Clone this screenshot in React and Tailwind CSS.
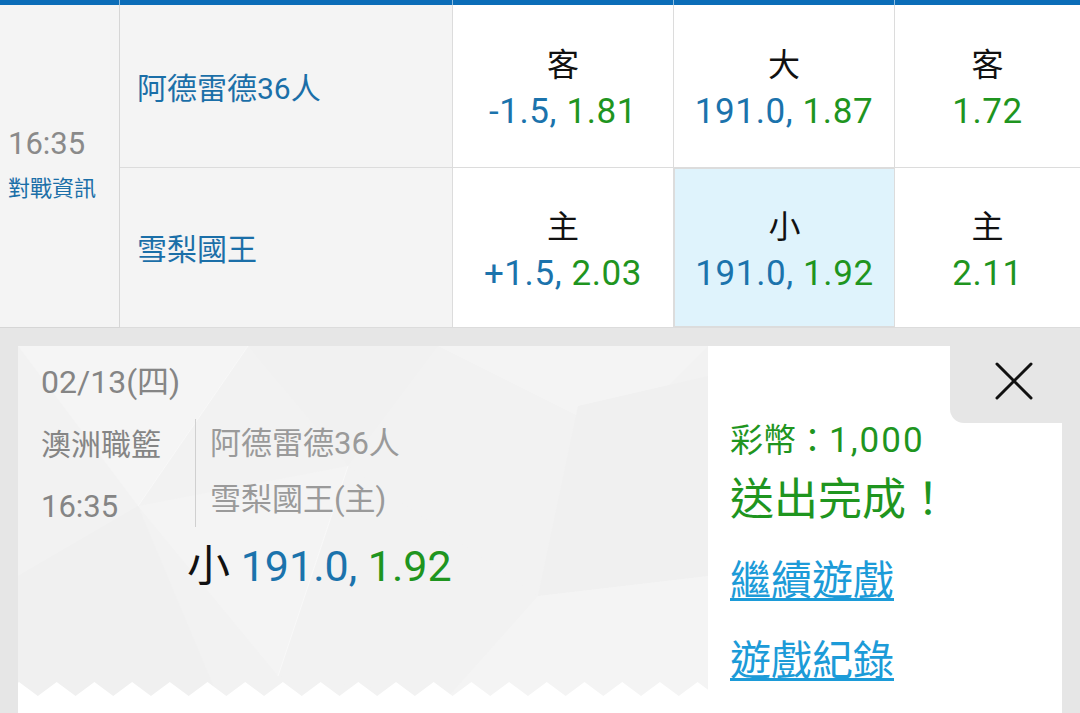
import React from "react";

function Zigzag() {
  const pts = [];
  const period = 37.7;
  let x = -period / 2 + 1;
  pts.push("0,20");
  for (let i = 0; i < 22; i++) {
    const v = x + i * period;
    pts.push(`${v},14`);
    pts.push(`${v + period / 2},0`);
  }
  pts.push("700,14");
  pts.push("700,20");
  return (
    <svg className="absolute left-0 bottom-0" width="690" height="16" viewBox="0 0 690 16" preserveAspectRatio="none">
      <polygon points={pts.join(" ")} fill="#ffffff" transform="translate(0,1)" />
    </svg>
  );
}

function Pattern() {
  return (
    <svg className="absolute inset-0" width="690" height="351" viewBox="0 0 690 351">
      <polygon points="0,0 230,0 120,160" fill="#f5f5f5" />
      <polygon points="230,0 420,0 330,120" fill="#f1f1f1" />
      <polygon points="420,0 690,0 600,90" fill="#f4f4f4" />
      <polygon points="560,60 690,30 690,230 520,250" fill="#f0f0f0" />
      <polygon points="120,160 330,120 260,330" fill="#f4f4f4" />
      <polygon points="0,230 120,160 200,351 0,351" fill="#f0f0f0" />
      <polygon points="330,120 520,250 430,351 260,330" fill="#f2f2f2" />
      <polygon points="520,250 690,230 690,351 430,351" fill="#f4f4f4" />
      <line x1="230" y1="0" x2="120" y2="160" stroke="#f8f8f8" strokeWidth="1" />
      <line x1="330" y1="120" x2="260" y2="330" stroke="#f8f8f8" strokeWidth="1" />
    </svg>
  );
}

function OddsCell({ label, a, b, selected, last }) {
  return (
    <div
      className={
        "flex flex-col items-center justify-center pt-[6px] " +
        (selected ? "bg-[#dff3fc] border border-[#b9d3e1] " : "bg-white ") +
        (last ? "" : "border-r border-[#dcdcdc] ")
      }
    >
      <div className="text-[32px] leading-[42px] text-[#111]">{label}</div>
      <div className="text-[35px] leading-[44px] mt-[4px] tracking-[0.6px]">
        {a !== null && <span className="text-[#1b73ac]">{a}, </span>}
        <span className="text-[#1f951f]">{b}</span>
      </div>
    </div>
  );
}

export default function App() {
  return (
    <div className="w-[1080px] h-[713px] overflow-hidden bg-[#e6e6e6] font-['Roboto','Noto_Sans_CJK_TC',sans-serif]">
      <div className="grid grid-cols-[120px_333px_221px_221px_185px] grid-rows-[5px_163px_160px]">
        <div className="bg-[#0b6db8] border-r border-[#8fbde0]" />
        <div className="bg-[#0b6db8] border-r border-[#8fbde0]" />
        <div className="bg-[#0b6db8] border-r border-[#8fbde0]" />
        <div className="bg-[#0b6db8] border-r border-[#8fbde0]" />
        <div className="bg-[#0b6db8]" />

        <div className="row-span-2 bg-[#f4f4f4] border-r border-b border-[#d6d6d6] flex flex-col justify-center pl-[8px] pb-[5px]">
          <div className="text-[31px] leading-[40px] text-[#8a8a8a]">16:35</div>
          <div className="text-[22px] leading-[30px] text-[#1b6fa8] mt-[10px]">對戰資訊</div>
        </div>

        <div className="bg-[#f4f4f4] border-r border-b border-[#dcdcdc] flex items-center pl-[17px] pt-[5px]">
          <div className="text-[30px] leading-[40px] text-[#1b6fa8]">阿德雷德36人</div>
        </div>
        <div className="border-b border-[#dcdcdc] grid">
          <OddsCell label="客" a="-1.5" b="1.81" />
        </div>
        <div className="border-b border-[#dcdcdc] grid">
          <OddsCell label="大" a="191.0" b="1.87" />
        </div>
        <div className="border-b border-[#dcdcdc] grid">
          <OddsCell label="客" a={null} b="1.72" last />
        </div>

        <div className="bg-[#f4f4f4] border-r border-b border-[#dcdcdc] flex items-center pl-[17px] pt-[4px]">
          <div className="text-[30px] leading-[40px] text-[#1b6fa8]">雪梨國王</div>
        </div>
        <div className="border-b border-[#dcdcdc] grid">
          <OddsCell label="主" a="+1.5" b="2.03" />
        </div>
        <div className="border-b border-[#dcdcdc] grid">
          <OddsCell label="小" a="191.0" b="1.92" selected />
        </div>
        <div className="border-b border-[#dcdcdc] grid">
          <OddsCell label="主" a={null} b="2.11" last />
        </div>
      </div>

      <div className="flex px-[18px] pt-[18px] h-[385px]">
        <div className="w-[690px] flex flex-col bg-white">
          <div className="relative h-[351px] bg-[#f2f2f2] overflow-hidden">
            <Pattern />
            <Zigzag />
            <div className="relative pl-[23px] pt-[16px]">
              <div className="text-[32px] leading-[40px] text-[#858585]">02/13(四)</div>
              <div className="flex mt-[17px]">
                <div className="w-[154px] pt-[6px] pb-[0px]">
                  <div className="text-[30px] leading-[40px] text-[#858585]">澳洲職籃</div>
                  <div className="text-[31px] leading-[40px] text-[#858585] mt-[22px]">16:35</div>
                </div>
                <div className="border-l border-[#d0d0d0] pl-[14px] pt-[5px]">
                  <div className="text-[31px] leading-[40px] text-[#9a9a9a]">阿德雷德36人</div>
                  <div className="text-[31px] leading-[40px] text-[#9a9a9a] mt-[16px]">雪梨國王(主)</div>
                </div>
              </div>
              <div className="ml-[146px] mt-[14px] text-[43px] leading-[50px]">
                <span className="text-[#111]">小 </span>
                <span className="text-[#1b73ac]">191.0, </span>
                <span className="text-[#1f951f]">1.92</span>
              </div>
            </div>
          </div>
          <div className="flex-1 bg-white" />
        </div>

        <div className="w-[354px] bg-white flex flex-col">
          <div className="flex justify-end">
            <div className="w-[112px] h-[77px] bg-[#e6e6e6] rounded-bl-[14px] pl-[45px] pt-[16px]">
              <svg width="38" height="38" viewBox="0 0 38 38">
                <line x1="2" y1="2" x2="36" y2="36" stroke="#111" strokeWidth="3" strokeLinecap="round" />
                <line x1="36" y1="2" x2="2" y2="36" stroke="#111" strokeWidth="3" strokeLinecap="round" />
              </svg>
            </div>
          </div>
          <div className="pl-[22px] -mt-[2px]">
            <div className="text-[33px] leading-[40px] text-[#1f951f]">
              彩幣：<span className="text-[35px] tracking-[2px]">1,000</span>
            </div>
            <div className="text-[44px] leading-[52px] text-[#1f951f] mt-[13px]">送出完成！</div>
            <div className="mt-[29px]">
              <span className="text-[41px] leading-[52px] text-[#1c9bd8] underline decoration-[3px] underline-offset-[3px]">繼續遊戲</span>
            </div>
            <div className="mt-[28px]">
              <span className="text-[41px] leading-[52px] text-[#1c9bd8] underline decoration-[3px] underline-offset-[3px]">遊戲紀錄</span>
            </div>
          </div>
        </div>
      </div>
    </div>
  );
}
